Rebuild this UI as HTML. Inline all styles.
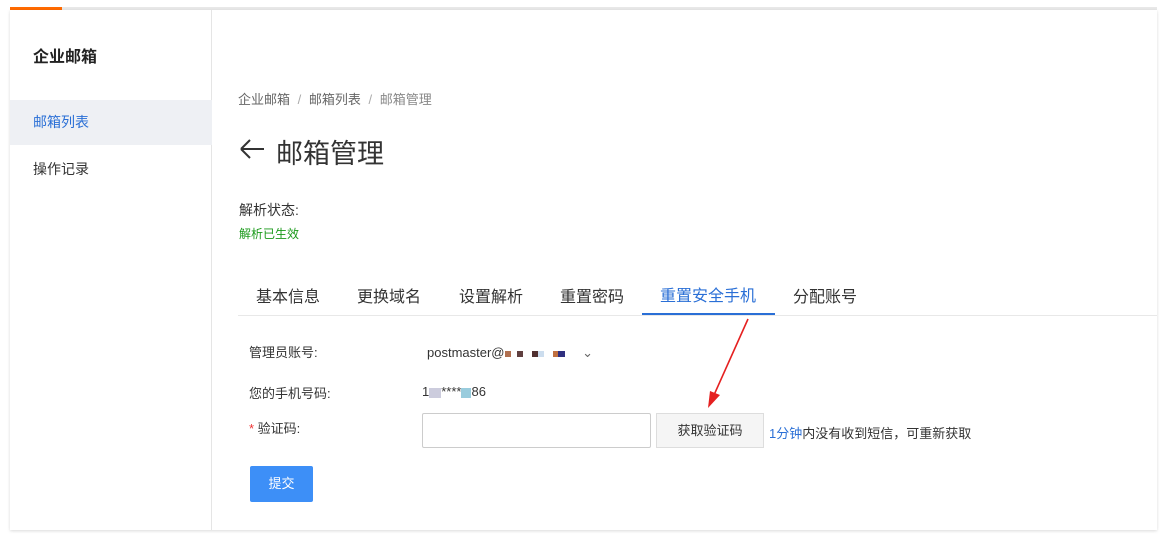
<!DOCTYPE html>
<html><head><meta charset="utf-8">
<style>
*{margin:0;padding:0;box-sizing:border-box}
body{width:1169px;height:535px;background:#fff;font-family:"Liberation Sans","Noto Sans CJK SC",sans-serif;position:relative;overflow:hidden;color:#333}
.topline{position:absolute;left:10px;top:7px;width:1147px;height:3px;background:#e8e8e8}
.topline i{position:absolute;left:0;top:0;width:52px;height:3px;background:#ff6a00}
.frame{position:absolute;left:10px;top:10px;width:1147px;height:520px;background:#fff;box-shadow:0 1px 3px rgba(0,0,0,.15)}
.side{position:absolute;left:0;top:0;width:202px;height:520px;border-right:1px solid #e5e5e5}
.side h1{position:absolute;left:23px;top:33px;font-size:16px;font-weight:bold;color:#222}
.side .it{position:absolute;left:0;width:202px;height:45px;line-height:45px;padding-left:23px;font-size:14px;color:#333}
.abs{position:absolute;white-space:nowrap}
.tab{position:absolute;top:283px;font-size:16px;color:#333}
</style></head><body>
<div class="topline"><i></i></div>
<div class="frame">
 <div class="side">
  <h1>企业邮箱</h1>
  <div class="it" style="top:90px;background:#eef0f4;color:#2a6fd6">邮箱列表</div>
  <div class="it" style="top:137px">操作记录</div>
 </div>
</div>
<div class="abs" style="left:238px;top:89px;font-size:13px;color:#666">企业邮箱 <span style="color:#aaa;margin:0 4px">/</span> 邮箱列表 <span style="color:#aaa;margin:0 4px">/</span> <span style="color:#888">邮箱管理</span></div>
<svg class="abs" style="left:239px;top:138px" width="26" height="22"><path d="M2 11H25M2 11L11 2M2 11L11 20" stroke="#333" stroke-width="2" fill="none"/></svg>
<div class="abs" style="left:276px;top:132px;font-size:27px;color:#333">邮箱管理</div>
<div class="abs" style="left:239px;top:200px;font-size:14px;color:#333">解析状态:</div>
<div class="abs" style="left:239px;top:225px;font-size:12px;color:#1a9a1a">解析已生效</div>
<div class="tab" style="left:256px">基本信息</div>
<div class="tab" style="left:357px">更换域名</div>
<div class="tab" style="left:459px">设置解析</div>
<div class="tab" style="left:560px">重置密码</div>
<div class="tab" style="left:660px;top:282px;color:#2a6fd6">重置安全手机</div>
<div class="tab" style="left:793px">分配账号</div>
<div class="abs" style="left:238px;top:315px;width:919px;height:1px;background:#e8e8e8"></div>
<div class="abs" style="left:642px;top:313px;width:133px;height:2px;background:#2a6fd6"></div>
<div class="abs" style="left:249px;top:342px;font-size:13px">管理员账号:</div>
<div class="abs" style="left:427px;top:345px;font-size:13px">postmaster@<span style="display:inline-block;width:60px;height:6px;background:linear-gradient(90deg,#b07050 0 10%,#fff 10% 20%,#604040 20% 30%,#fff 30% 45%,#503030 45% 55%,#cde 55% 65%,#fff 65% 80%,#c07040 80% 88%,#303080 88%);vertical-align:middle"></span> <span style="color:#666;margin-left:14px">⌄</span></div>
<div class="abs" style="left:249px;top:383px;font-size:13px">您的手机号码:</div>
<div class="abs" style="left:422px;top:384px;font-size:13px">1<span style="display:inline-block;width:12px;height:10px;background:#ccd;vertical-align:middle"></span>****<span style="display:inline-block;width:10px;height:10px;background:#9cd;vertical-align:middle"></span>86</div>
<div class="abs" style="left:249px;top:418px;font-size:13px"><span style="color:#e33">*</span> 验证码:</div>
<div class="abs" style="left:422px;top:413px;width:229px;height:35px;border:1px solid #ccc;border-radius:2px"></div>
<div class="abs" style="left:656px;top:413px;width:108px;height:35px;border:1px solid #ddd;background:#f5f5f5;font-size:13px;text-align:center;line-height:33px">获取验证码</div>
<div class="abs" style="left:769px;top:423px;font-size:13px"><span style="color:#2a6fd6">1分钟</span>内没有收到短信，可重新获取</div>
<div class="abs" style="left:250px;top:466px;width:63px;height:36px;background:#3d8ff7;border-radius:2px;color:#fff;font-size:13px;text-align:center;line-height:36px">提交</div>
<svg class="abs" style="left:700px;top:315px" width="60" height="95"><line x1="48" y1="4" x2="14" y2="80" stroke="#e52020" stroke-width="1.6"/><polygon points="8,93 10,76 20,80" fill="#e52020"/></svg>
</body></html>
